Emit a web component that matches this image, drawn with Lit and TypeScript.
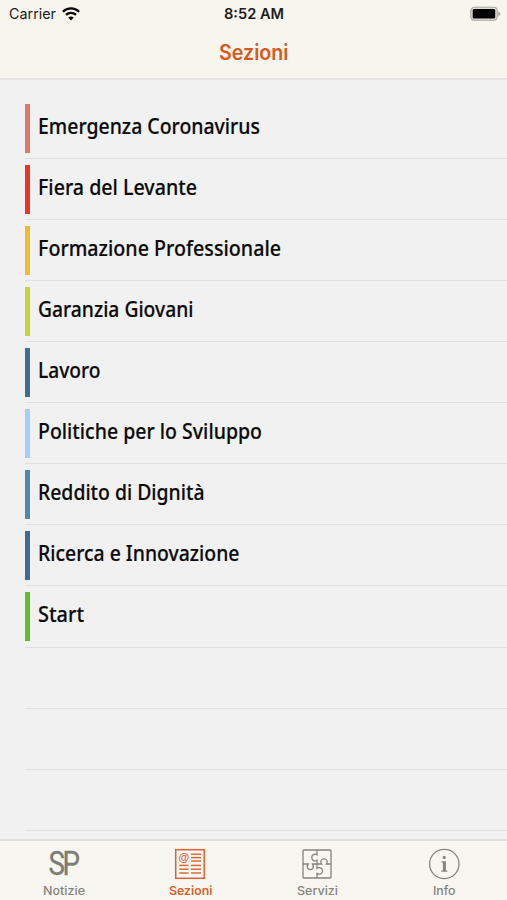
import { LitElement, html, css, svg } from "lit";
import { customElement } from "lit/decorators.js";

interface Section { name: string; color: string; width: number }

const SECTIONS: Section[] = [
  { name: "Emergenza Coronavirus", color: "#d77a70", width: 222 },
  { name: "Fiera del Levante", color: "#e6352b", width: 159 },
  { name: "Formazione Professionale", color: "#f0bc2c", width: 243 },
  { name: "Garanzia Giovani", color: "#c5d637", width: 155.5 },
  { name: "Lavoro", color: "#426e8a", width: 62.5 },
  { name: "Politiche per lo Sviluppo", color: "#a7cff5", width: 224 },
  { name: "Reddito di Dignità", color: "#5586a8", width: 166.5 },
  { name: "Ricerca e Innovazione", color: "#426c8c", width: 201.5 },
  { name: "Start", color: "#62bd2c", width: 46 },
];

const lines = (x1: number, x2: number, ys: number[]) =>
  ys.map((y) => svg`<path d="M${x1} ${y}H${x2}" stroke-width="1.4"/>`);

const ICONS = {
  notizie: html`<svg width="32" height="32" viewBox="0 0 32 32">
    <text transform="translate(0.6 27.3) scale(0.84 1)" font-family="Roboto, sans-serif" font-size="33" font-weight="400"
      letter-spacing="-3" fill="#7d7c77" stroke="#7d7c77" stroke-width="0.3">SP</text></svg>`,
  sezioni: html`<svg width="32" height="32" viewBox="0 0 32 32" fill="none" stroke="currentColor">
    <rect x="1.7" y="1.7" width="28.6" height="28.6" stroke-width="1.5"/>
    <text x="4.6" y="13.4" font-family="Liberation Sans, sans-serif" font-size="11" font-weight="700" fill="currentColor" stroke="none">@</text>
    ${lines(17, 27, [6.2, 9.6, 13])}${lines(5.3, 14.5, [17.4, 21.2, 25])}${lines(17, 27, [17.4, 21.2, 25])}</svg>`,
  servizi: html`<svg width="32" height="32" viewBox="0 0 32 32" fill="none" stroke="currentColor" stroke-width="1.3">
    <rect x="2" y="2" width="28" height="28" rx="1"/>
    <path d="M16 2V6.8C14 5.3 10.8 6.3 10.8 9.5S14 13.6 16 12.2V16H20.6C18.7 13.5 20.3 10.8 23 10.8S27.3 13.5 25.4 16H30"/>
    <path d="M2 16H7.2C5.2 18.5 6.5 21.6 9.3 21.6S13.3 18.5 11.5 16H16V20.3C18.4 18.6 21.6 20.1 21.6 23S18.4 27.1 16 25.4V30"/></svg>`,
  info: html`<svg width="32" height="32" viewBox="0 0 32 32" fill="none" stroke="currentColor">
    <circle cx="16.3" cy="16" r="14.7" stroke-width="1.3"/>
    <circle cx="16.2" cy="9.4" r="1.6" fill="currentColor" stroke="none"/>
    <path d="M13.4 13.2H17.9V22.5H19.4V23.8H13.2V22.5H14.9V14.5H13.4Z" fill="currentColor" stroke="none"/></svg>`,
};

const TABS = [
  { label: "Notizie", icon: ICONS.notizie, width: 42 },
  { label: "Sezioni", icon: ICONS.sezioni, width: 43.5 },
  { label: "Servizi", icon: ICONS.servizi, width: 41 },
  { label: "Info", icon: ICONS.info, width: 22.5 },
];

@customElement("app-root")
export class AppRoot extends LitElement {
  static styles = css`
    :host { display: flex; flex-direction: column; height: 900px; overflow: hidden; background: #f1f1f1; font-family: Inter, "Liberation Sans", sans-serif; }
    svg { display: block; overflow: visible; }
    .header { flex: none; box-sizing: border-box; height: 80px; background: #f6f5ee; border-bottom: 2px solid #e5e4e2; }
    .status { height: 28px; display: grid; grid-template-columns: 1fr auto 1fr; align-items: center; color: #1c1c1a; }
    .carrier { display: flex; align-items: center; gap: 6px; padding-left: 9px; }
    .battery { justify-self: end; padding-right: 6px; }
    .title { height: 48px; display: flex; justify-content: center; align-items: center; color: #d9581d; }
    .list { flex: 1; min-height: 0; overflow: hidden; padding: 17.8px 0 0 25px; }
    .row { box-sizing: border-box; height: 61.08px; border-bottom: 1px solid #dedfe0; display: flex; padding-top: 5.8px; gap: 8px; }
    .bar { width: 5px; height: 49px; }
    .name { margin-top: 9px; font-family: "Noto Sans", sans-serif; font-weight: 500; font-size: 21.3px; fill: #0b0b0b; stroke: #0b0b0b; stroke-width: 0.2px; }
    .tabs { flex: none; box-sizing: border-box; height: 61px; display: grid; grid-template-columns: repeat(4, 1fr); background: #f7f6f1; border-top: 2px solid #dfdfde; }
    .tab { display: flex; flex-direction: column; align-items: center; padding: 7px 0 0 0.6px; gap: 3px; color: #85847e; }
    .tab.active { color: #d9622f; }
    .label { font-size: 12px; font-weight: 500; fill: currentColor; }
    .active .label { font-weight: 600; }
  `;

  private text(value: string, width: number, height: number, baseline: number, size: number, weight: number) {
    return html`<svg width=${width} height=${height}><text x="0" y=${baseline} font-size=${size} font-weight=${weight}
      fill="currentColor" textLength=${width} lengthAdjust="spacingAndGlyphs">${value}</text></svg>`;
  }

  render() {
    return html`
      <header class="header">
        <div class="status">
          <div class="carrier">
            ${this.text("Carrier", 47, 20, 15, 14.5, 400)}
            <svg width="18" height="15" viewBox="0 0 18 15" fill="none" stroke="#080808" stroke-width="2.3">
              <path d="M0.9 4.7C5.5 0.2 12.5 0.2 17.1 4.7M4 7.9C6.8 5.1 11.2 5.1 14 7.9"/>
              <path d="M6.2 10.6Q9 8.2 11.8 10.6L9 13.5Z" fill="#080808" stroke="none"/>
            </svg>
          </div>
          ${this.text("8:52 AM", 60, 20, 15, 14.3, 600)}
          <div class="battery">
            <svg width="31" height="14" viewBox="0 0 31 14">
              <rect x="0.8" y="0.3" width="26.4" height="13" rx="3.5" fill="#dddcd6" stroke="#aaa9a4" stroke-width="1.1"/>
              <rect x="2.7" y="2.1" width="22.5" height="9.5" rx="1.3" fill="#000"/>
              <path d="M28.2 4.4Q33 6.8 28.2 9.2Z" fill="#aaa9a4"/>
            </svg>
          </div>
        </div>
        <div class="title">${this.text("Sezioni", 69.5, 30, 22.5, 21, 600)}</div>
      </header>
      <main class="list">
        ${SECTIONS.map((s) => html`<div class="row">
          <div class="bar" style="background:${s.color}"></div>
          <svg class="name" width=${s.width} height="30"><text x="0" y="21" textLength=${s.width} lengthAdjust="spacingAndGlyphs">${s.name}</text></svg>
        </div>`)}
        ${[0, 1, 2].map(() => html`<div class="row"></div>`)}
      </main>
      <nav class="tabs">
        ${TABS.map((t, i) => html`<div class="tab ${i === 1 ? "active" : ""}">
          ${t.icon}
          <svg class="label" width=${t.width} height="16"><text x="0" y="12.3" textLength=${t.width} lengthAdjust="spacingAndGlyphs">${t.label}</text></svg>
        </div>`)}
      </nav>`;
  }
}
